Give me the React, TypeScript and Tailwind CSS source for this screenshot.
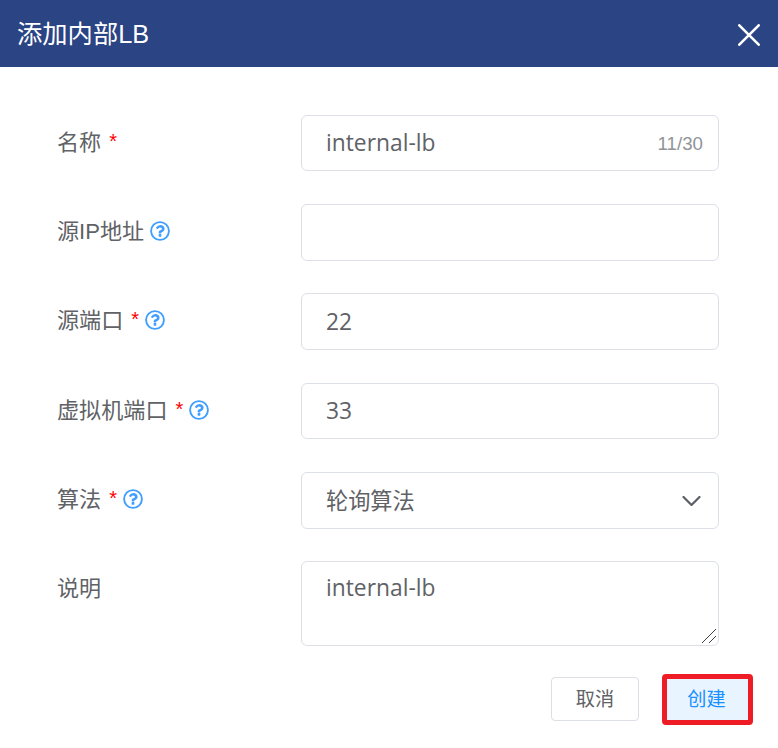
import type { ReactNode } from "react";

function HelpIcon() {
  return (
    <svg className="mb-[3px] ml-[6px] size-[20px] shrink-0 text-[#409eff]" viewBox="0 48 1536 1536" fill="currentColor">
      <circle cx="768" cy="816" r="685" fill="none" stroke="currentColor" strokeWidth="145" />
      <path d="M870 1072v145q0 14-9 23t-23 9h-140q-14 0-23-9t-9-23v-145q0-14 9-23t23-9h140q14 0 23 9t9 23zM1116 650q0 50-15 90t-45.500 69-52 44-59.500 36q-32 18-46.500 28t-26 24-11.500 29q0 14-9 23t-23 9h-130q-14 0-23-9t-9-23v-36q0-35 10.500-64.500t24-47.500 39-35.500 41-25.500 44.500-21q53-25 75-43t22-49q0-42-43.500-71.500t-95.500-29.500q-56 0-95 27-29 20-80 83-9 12-25 12-11 0-19-6l-88-67q-10-7-12-20t5-23q122-192 329-192 129 0 223.500 79.500t104.500 209.500z" />
    </svg>
  );
}

function Row({
  label,
  required = false,
  help = false,
  className,
  children,
}: {
  label: string;
  required?: boolean;
  help?: boolean;
  className: string;
  children?: ReactNode;
}) {
  return (
    <div className={`flex ${className}`}>
      <div className="flex h-[56px] w-[244px] shrink-0 items-center text-[22.1px] leading-[32px]">
        <span className="whitespace-nowrap">{label}</span>
        {required && <span className="mb-[5px] ml-[8px] text-[20px] text-[#f00]">*</span>}
        {help && <HelpIcon />}
      </div>
      <div className="relative flex h-full w-[418px] items-center rounded-[6px] border border-[#dcdfe6] pl-[24px] font-['Open_Sans','Noto_Sans_CJK_SC',sans-serif] text-[22.8px]">
        {children}
      </div>
    </div>
  );
}

export default function App() {
  return (
    <div className="h-[748px] w-[778px] overflow-hidden bg-white font-['Liberation_Sans','Noto_Sans_CJK_SC',sans-serif] text-[#606266]">
      <header className="flex h-[67px] items-center justify-between bg-[#2a4484] pr-[18px] pl-[17px] text-white">
        <h1 className="text-[25.3px] leading-[36px]">添加内部LB</h1>
        <svg className="mt-[3px] size-[22px]" viewBox="0 0 22 22" fill="none" stroke="currentColor" strokeWidth="2.6" strokeLinecap="round">
          <path d="M1.3 1.3 20.7 20.7M20.7 1.3 1.3 20.7" />
        </svg>
      </header>
      <main className="pt-[48px] pl-[57px]">
        <Row label="名称" required className="mb-[33px] h-[56px]">
          <span className="pt-px">internal-lb</span>
          <span className="mt-[2px] mr-[15px] ml-auto font-['Liberation_Sans',sans-serif] text-[18.7px] text-[#909399]">11/30</span>
        </Row>
        <Row label="源IP地址" help className="mb-[32px] h-[57px]" />
        <Row label="源端口" required help className="mb-[33px] h-[57px]">
          <span className="pt-px">22</span>
        </Row>
        <Row label="虚拟机端口" required help className="mb-[33px] h-[56px]">
          <span>33</span>
        </Row>
        <Row label="算法" required help className="mb-[32px] h-[57px]">
          <span className="pt-px text-[22.2px]">轮询算法</span>
          <svg className="mt-px mr-[17px] ml-auto h-[10px] w-[19px]" viewBox="0 0 19 10" fill="none" stroke="#5a5e66" strokeWidth="2.2" strokeLinecap="round" strokeLinejoin="round">
            <path d="M1.5 1 9.5 9 17.5 1" />
          </svg>
        </Row>
        <Row label="说明" className="h-[85px]">
          <span className="mt-[11px] self-start leading-[30px]">internal-lb</span>
          <svg className="absolute right-[2px] bottom-[2px] size-[14px]" viewBox="0 0 14 14" fill="none" stroke="#444" strokeWidth="1">
            <path d="M0 14 14 0M7 14 14 7" />
          </svg>
        </Row>
      </main>
      <footer className="mt-[28px] flex items-start pl-[551px] text-[19.200px]">
        <button className="mt-[3px] h-[44px] w-[88px] rounded-[4px] border border-[#dcdfe6] bg-white pt-[2px]">取消</button>
        <button className="ml-[23px] h-[51px] w-[91px] rounded-[4px] border-[5px] border-[#ee1c25] bg-[#e8f4ff] pt-[2px] pr-[2px] text-[#1890ff]">创建</button>
      </footer>
    </div>
  );
}
